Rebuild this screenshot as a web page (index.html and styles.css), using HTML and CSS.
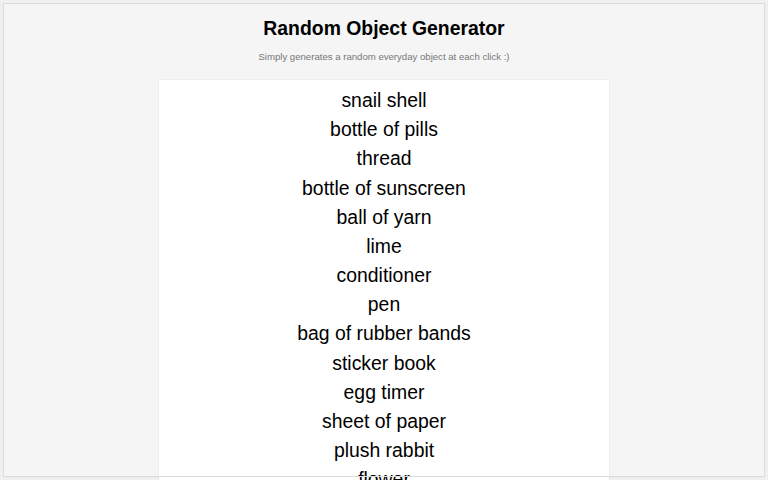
FILE: index.html
```html
<!DOCTYPE html>
<html>
<head>
<meta charset="utf-8">
<link rel="stylesheet" href="styles.css">
</head>
<body>
<div class="panel">
  <h1 class="title">Random Object Generator</h1>
  <p class="subtitle">Simply generates a random everyday object at each click :)</p>
  <div class="card">
    <div class="item">snail shell</div>
    <div class="item">bottle of pills</div>
    <div class="item">thread</div>
    <div class="item">bottle of sunscreen</div>
    <div class="item">ball of yarn</div>
    <div class="item">lime</div>
    <div class="item">conditioner</div>
    <div class="item">pen</div>
    <div class="item">bag of rubber bands</div>
    <div class="item">sticker book</div>
    <div class="item">egg timer</div>
    <div class="item">sheet of paper</div>
    <div class="item">plush rabbit</div>
    <div class="item">flower</div>
  </div>
</div>
</body>
</html>
```
FILE: styles.css
```css
html, body {
  margin: 0;
  padding: 0;
  height: 100%;
  overflow: hidden;
  background: #f0f0f0;
  font-family: "Liberation Sans", Arial, sans-serif;
}
body {
  padding: 4px;
  box-sizing: border-box;
}
.panel {
  height: 100%;
  box-sizing: border-box;
  background: #f5f5f5;
  outline: 1px solid #dcdcdc;
  box-shadow: 0 1px 2px rgba(0,0,0,0.08);
  display: flex;
  flex-direction: column;
  align-items: center;
  position: relative;
  z-index: 1;
}
.title {
  margin: 10px 0 0;
  font-size: 19.4px;
  font-weight: bold;
  color: #000;
  line-height: 28px;
}
.subtitle {
  margin: 8px 0 0;
  font-size: 9.6px;
  color: #777;
  line-height: 14px;
}
.card {
  margin-top: 16px;
  width: 450px;
  background: #fff;
  box-shadow: 0 0 1px rgba(0,0,0,0.15);
  padding-top: 6px;
  flex-shrink: 0;
  position: relative;
  z-index: -1;
}
.item {
  text-align: center;
  font-size: 19.4px;
  line-height: 29.17px;
  color: #000;
}
```
